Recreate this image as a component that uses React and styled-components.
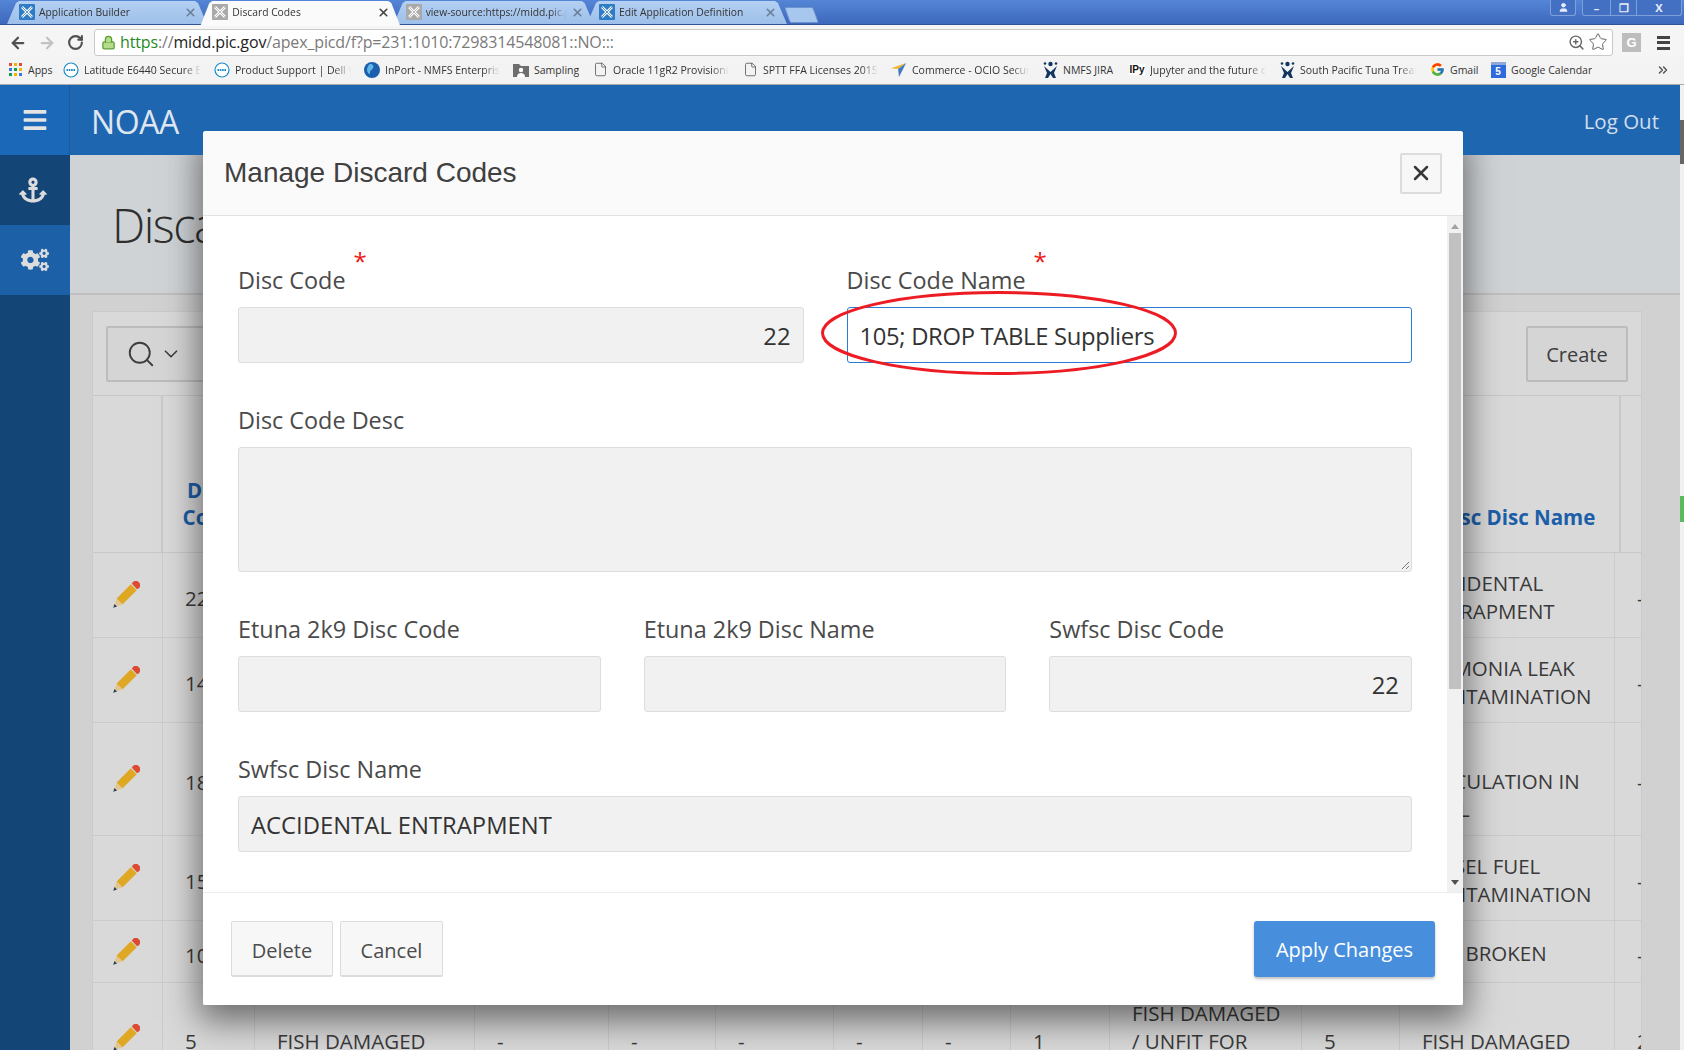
import styled, { createGlobalStyle } from "styled-components";
import { FaAnchor, FaCogs, FaBars } from "react-icons/fa";
import { FcGoogle } from "react-icons/fc";
import { File, Search, ChevronDown, X, RotateCw, ArrowLeft, ArrowRight, Star, ZoomIn, Lock, User, ChevronsRight } from "lucide-react";

const GlobalStyle = createGlobalStyle`
  html, body { margin: 0; padding: 0; overflow: hidden; }
  body { font-family: "Open Sans", "Liberation Sans", sans-serif; color: #333; }
  * { box-sizing: border-box; }
`;

const Viewport = styled.div`
  position: relative;
  width: 1684px;
  height: 1050px;
  overflow: hidden;
  display: flex;
  flex-direction: column;
`;

/* browser chrome */
const TabStrip = styled.div`
  height: 25px;
  flex: none;
  display: flex;
  padding-left: 7px;
  background: linear-gradient(#5585d6, #3d68bb);
  border-bottom: 1px solid #2f5398;
`;

const Tab = styled.div`
  position: relative;
  z-index: ${(p) => (p.$active ? 2 : 1)};
  width: 200px;
  height: ${(p) => (p.$active ? 25 : 23)}px;
  margin: 1px -6.7px 0 0;
  padding: 0 10px ${(p) => (p.$active ? 3 : 1)}px 12px;
  display: flex;
  align-items: center;
  gap: 4px;
  font-size: 10.3px;
  color: #333;
  background: ${(p) => (p.$active ? "#fafafa" : "linear-gradient(#b4d0f2, #9dbfea)")};
  clip-path: polygon(0 100%, 9px 2px, 12px 0, calc(100% - 12px) 0, calc(100% - 9px) 2px, 100% 100%);
`;

const TabLabel = styled.span`
  flex: 1;
  white-space: nowrap;
  overflow: hidden;
  mask-image: linear-gradient(to right, #000 88%, transparent);
`;

const TabClose = styled(X)`
  flex: none;
  color: ${(p) => (p.$active ? "#444" : "#6c7f99")};
`;

const NewTab = styled.div`
  width: 29px;
  height: 16px;
  margin: 7px 0 0 7px;
  background: #a8c7ef;
  border: 1px solid #6f93cf;
  transform: skewX(20deg);
  border-radius: 2px;
`;

const WindowControls = styled.div`
  margin-left: auto;
  margin-right: 2px;
  display: flex;
  gap: 6px;
  height: 16px;
`;

const WindowGroup = styled.div`
  display: flex;
  align-items: center;
  height: 16px;
  border: 1px solid #7ea0da;
  border-top: none;
  border-radius: 0 0 3px 3px;
  background: #4470c4;
  color: #e9eef8;
`;

const WindowButton = styled.div`
  width: ${(p) => p.$w}px;
  height: 15px;
  display: flex;
  align-items: center;
  justify-content: center;
  font-size: 11px;
  font-weight: 700;
  & + & { border-left: 1px solid #7ea0da; }
`;

const Toolbar = styled.div`
  height: 32px;
  flex: none;
  display: flex;
  align-items: center;
  background: #f5f5f5;
  padding: 3px 14px 0 0;
`;

const NavButton = styled.div`
  width: 29px;
  display: flex;
  justify-content: center;
  color: ${(p) => (p.$off ? "#c2c2c2" : "#505050")};
`;

const NavGroup = styled.div`
  display: flex;
  padding-left: 3px;
  width: 94px;
`;

const Omnibox = styled.div`
  width: 1519px;
  height: 27px;
  display: flex;
  align-items: center;
  background: #fff;
  border: 1px solid #c9c9c9;
  border-radius: 3px;
  padding: 0 4px 1px 6px;
  font-size: 16px;
  letter-spacing: -0.15px;
`;

const UrlGreen = styled.span`
  color: #1f8a1f;
  margin-left: 4px;
`;
const UrlHost = styled.span`
  color: #222;
`;
const UrlPath = styled.span`
  color: #7a7a7a;
`;

const OmniIcons = styled.div`
  margin-left: auto;
  display: flex;
  align-items: center;
  gap: 3px;
  color: #666;
`;

const ExtBadge = styled.div`
  width: 19px;
  height: 19px;
  margin-left: 9px;
  background: #bdbdbd;
  color: #fff;
  font: 700 13px "Liberation Sans", sans-serif;
  display: flex;
  align-items: center;
  justify-content: center;
`;

const ChromeMenu = styled.div`
  width: 13px;
  margin-left: 16px;
  display: flex;
  flex-direction: column;
  gap: 2.5px;
  & > i { display: block; height: 3px; background: #444; }
`;

const Bookmarks = styled.div`
  height: 28px;
  flex: none;
  display: flex;
  align-items: center;
  padding: 0 0 2px 7px;
  background: #f3f3f3;
  border-bottom: 1px solid #a9a9a9;
  font-size: 10.5px;
  color: #333;
`;

const Bookmark = styled.div`
  width: ${(p) => p.$w}px;
  flex: none;
  display: flex;
  align-items: center;
  gap: 5px;
`;

const BookmarkIcon = styled.div`
  width: 16px;
  height: 16px;
  flex: none;
  display: flex;
  align-items: center;
  justify-content: center;
`;

const BookmarkText = styled.span`
  white-space: nowrap;
  overflow: hidden;
  flex: ${(p) => (p.$fade ? 1 : "none")};
  margin-right: ${(p) => (p.$fade ? "13px" : 0)};
  ${(p) => p.$fade && "mask-image: linear-gradient(to right, #000 85%, transparent);"}
`;

const IpyBadge = styled.span`
  font: 700 10px "Liberation Sans", sans-serif;
  color: #111;
  background: #fff;
`;

const CalBadge = styled.span`
  width: 15px;
  height: 16px;
  background: #2f6bdc;
  color: #fff;
  border-top: 3px solid #8fa9d8;
  font: 700 10px "Liberation Sans", sans-serif;
  display: flex;
  align-items: center;
  justify-content: center;
`;

const MoreMarks = styled(ChevronsRight)`
  margin-left: auto;
  margin-right: 14px;
  color: #555;
`;

/* application shell */
const Shell = styled.div`
  flex: 1;
  display: flex;
  min-height: 0;
`;

const AppColumn = styled.div`
  flex: 1;
  display: flex;
  flex-direction: column;
  min-width: 0;
`;

const PageScroll = styled.div`
  width: 4px;
  flex: none;
  background: #f1f1f1;
`;

const PageThumb = styled.div`
  height: 44px;
  margin-top: 35px;
  background: #666;
`;

const PageMark = styled.div`
  height: 26px;
  margin-top: 332px;
  background: #5cb85c;
`;

const AppHeader = styled.header`
  position: relative;
  z-index: 2;
  height: 70px;
  flex: none;
  display: flex;
  align-items: center;
  background: #1f66b0;
  color: #dfe6f0;
`;

const MenuCell = styled.div`
  width: 70px;
  height: 100%;
  display: flex;
  align-items: center;
  justify-content: center;
  background: #1c68b8;
  border-right: 1px solid #1b5ba3;
  color: #e4e4e4;
  font-size: 26px;
`;

const Brand = styled.div`
  margin: 2px 0 0 21px;
  font-size: 32px;
  letter-spacing: -0.4px;
`;

const LogOut = styled.div`
  margin: 2px 21px 0 auto;
  font-size: 20.5px;
  color: #d3deec;
`;

const Below = styled.div`
  flex: 1;
  display: flex;
  min-height: 0;
`;

const Sidebar = styled.nav`
  width: 70px;
  flex: none;
  background: #144577;
`;

const SideItem = styled.div`
  height: 70px;
  display: flex;
  align-items: center;
  justify-content: center;
  padding-right: ${(p) => (p.$light ? 0 : 4)}px;
  color: #dcdcdc;
  font-size: 28px;
  background: ${(p) => (p.$light ? "#1c60a8" : "#144577")};
`;

const Content = styled.main`
  flex: 1;
  min-width: 0;
  background: #d1d1d1;
`;

const TitleBand = styled.div`
  height: 140px;
  padding: 37px 0 0 42px;
  background: #d0d3d6;
  border-bottom: 2px solid #bfbfbf;
  font-size: 47px;
  font-weight: 300;
  letter-spacing: -1.5px;
  line-height: 66px;
  color: #2e2e2e;
  white-space: nowrap;
`;

const Panel = styled.section`
  width: 1550px;
  margin: 16px 0 0 22px;
  background: #d9d9d9;
  border: 1px solid #cacaca;
  border-bottom: none;
  overflow: hidden;
`;

const PanelBar = styled.div`
  height: 84px;
  padding: 14px 13px 0 13px;
  display: flex;
  justify-content: space-between;
  border-bottom: 1px solid #c8c8c8;
`;

const BarButton = styled.div`
  height: 56px;
  width: ${(p) => p.$w}px;
  display: flex;
  align-items: center;
  justify-content: ${(p) => (p.$start ? "flex-start" : "center")};
  padding: ${(p) => (p.$start ? "0 0 0 18px" : "1px 0 0")};
  gap: 4px;
  background: #d5d5d5;
  border: 2px solid #bcbcbc;
  border-radius: 2px;
  font-size: 20px;
  color: #3d3d3d;
`;

const HeadRow = styled.div`
  height: 157px;
  display: grid;
  grid-template-columns: 70px 92px 220px 134px 107px 118px 89px 88px 99px 192px 98px 221px 21px;
  border-bottom: 1px solid #c8c8c8;
`;

const HeadCell = styled.div`
  display: flex;
  align-items: flex-end;
  justify-content: center;
  padding: 0 6px 21px;
  text-align: center;
  font-size: 20.5px;
  line-height: 27px;
  font-weight: 700;
  color: #1c5ea8;
  border-right: 2px solid #c8c8c8;
  white-space: pre-line;
  &:last-child { border-right: none; }
`;

const Row = styled.div`
  height: ${(p) => p.$h}px;
  display: grid;
  grid-template-columns: 70px 92px 220px 134px 107px 118px 89px 88px 99px 192px 98px 215px 27px;
  border-bottom: 1px solid #cbcbcb;
`;

const Cell = styled.div`
  display: flex;
  align-items: center;
  justify-content: ${(p) => (p.$center ? "center" : "flex-start")};
  padding: ${(p) => (p.$center ? "0 4px 0 0" : `${p.$shift || 6}px 0 0 22px`)};
  border-right: 1px solid #cbcbcb;
  font-size: 20.5px;
  line-height: 28px;
  color: #3a3a3a;
  white-space: pre-line;
  overflow: hidden;
  &:last-child { border-right: none; }
`;

/* modal */
const ModalShade = styled.div`
  position: absolute;
  z-index: 1;
  left: 203px;
  top: 131px;
  width: 1260px;
  height: 874px;
  box-shadow: 0 12px 32px 4px rgba(0, 0, 0, 0.5);
`;

const Modal = styled.div`
  position: absolute;
  z-index: 3;
  left: 203px;
  top: 131px;
  width: 1260px;
  height: 874px;
  display: flex;
  flex-direction: column;
  background: #fff;
  border-radius: 3px;
`;

const ModalHead = styled.div`
  height: 85px;
  flex: none;
  display: flex;
  align-items: center;
  justify-content: space-between;
  padding: 0 21px;
  background: #fafafa;
  border-bottom: 1px solid #e2e2e2;
  border-radius: 3px 3px 0 0;
`;

const ModalTitle = styled.h2`
  margin: 0;
  font: 400 28px "Liberation Sans", sans-serif;
  color: #404040;
`;

const CloseButton = styled.div`
  width: 42px;
  height: 41px;
  display: flex;
  align-items: center;
  justify-content: center;
  background: #f7f7f7;
  border: 2px solid #dcdcdc;
  border-radius: 2px;
  color: #383838;
`;

const ModalBody = styled.div`
  height: 676px;
  flex: none;
  display: flex;
  min-height: 0;
`;

const Form = styled.div`
  flex: 1;
  padding: 48px 35px 0 35px;
  display: flex;
  flex-direction: column;
  gap: 41px;
  overflow: hidden;
`;

const FormRow = styled.div`
  display: grid;
  grid-template-columns: repeat(${(p) => p.$cols}, 1fr);
  column-gap: ${(p) => p.$gap}px;
`;

const Field = styled.div`
  min-width: 0;
`;

const FieldLabel = styled.div`
  display: flex;
  align-items: flex-start;
  height: 32px;
  margin-bottom: 11px;
  font-size: 23.4px;
  line-height: 32px;
  color: #4a4a4a;
  white-space: nowrap;
`;

const Required = styled.span`
  height: 20px;
  margin: -19px 0 0 8px;
  font-size: 24px;
  line-height: 32px;
  color: #f01515;
`;

const FieldBox = styled.div`
  height: ${(p) => p.$h || 56}px;
  display: flex;
  align-items: center;
  justify-content: ${(p) => (p.$right ? "flex-end" : "flex-start")};
  padding: 2px 12px 0;
  font-size: 23.8px;
  letter-spacing: ${(p) => (p.$focus ? "-0.32px" : 0)};
  color: #333;
  background: ${(p) => (p.$focus ? "#fff" : "#f1f1f1")};
  border: 1px solid ${(p) => (p.$focus ? "#2a7bd3" : "#dddddd")};
  border-radius: 3px;
  white-space: nowrap;
`;

const TextAreaBox = styled(FieldBox)`
  position: relative;
`;

const Grip = styled.svg`
  position: absolute;
  right: 1px;
  bottom: 1px;
`;

const ModalScroll = styled.div`
  width: 16px;
  flex: none;
  background: #f1f1f1;
  display: flex;
  flex-direction: column;
  align-items: center;
`;

const ScrollArrow = styled.div`
  width: 0;
  height: 0;
  margin: ${(p) => (p.$down ? "auto 0 7px" : "8px 0 4px")};
  border-left: 4px solid transparent;
  border-right: 4px solid transparent;
  ${(p) => (p.$down ? "border-top: 5px solid #505050;" : "border-bottom: 5px solid #a3a3a3;")}
`;

const ScrollThumb = styled.div`
  width: 12px;
  height: 456px;
  background: #c1c1c1;
`;

const ModalFoot = styled.div`
  flex: 1;
  display: flex;
  align-items: flex-start;
  gap: 7px;
  padding: 28px 28px 0 28px;
  border-top: 1px solid #ececec;
`;

const FootButton = styled.div`
  height: 56px;
  width: ${(p) => p.$w}px;
  padding-top: 3px;
  display: flex;
  align-items: center;
  justify-content: center;
  font-size: 20px;
  color: #4c4c4c;
  background: #f7f7f7;
  border: 1px solid #dcdcdc;
  border-bottom-width: 2px;
  border-radius: 2px;
`;

const ApplyButton = styled.div`
  height: 56px;
  width: 181px;
  margin-left: auto;
  display: flex;
  align-items: center;
  justify-content: center;
  font-size: 20px;
  color: #fff;
  background: #478fdd;
  border-radius: 3px;
  box-shadow: 0 2px 3px rgba(0, 0, 0, 0.25);
`;

const Annotation = styled.svg`
  position: absolute;
  left: 616px;
  top: 158px;
  pointer-events: none;
`;

const AppFavicon = ({ grey }) => (
  <svg width="16" height="16" viewBox="0 0 16 16" style={{ flex: "none" }}>
    <rect width="16" height="16" rx="1" fill={grey ? "#a9a9a9" : "#2f7cc4"} />
    <path d="M3 3l10 10M13 3L3 13" stroke="#fff" strokeWidth="2.6" />
    <path d="M3 3l10 10M13 3L3 13" stroke={grey ? "#a9a9a9" : "#2f7cc4"} strokeWidth="0.8" />
  </svg>
);

const AppsIcon = () => (
  <svg width="13" height="13" viewBox="0 0 13 13">
    {["#e8453c", "#f4b400", "#e8453c", "#3b78e7", "#0f9d58", "#f4b400", "#0f9d58", "#f4b400", "#3b78e7"].map((c, i) => (
      <rect key={i} x={(i % 3) * 5} y={Math.floor(i / 3) * 5} width="3" height="3" fill={c} />
    ))}
  </svg>
);

const DellIcon = () => (
  <svg width="16" height="16" viewBox="0 0 16 16">
    <circle cx="8" cy="8" r="7" fill="#fff" stroke="#1a8cc9" strokeWidth="1.2" />
    <path d="M3.5 8h9" stroke="#1a8cc9" strokeWidth="2" strokeDasharray="1.6 .7" />
  </svg>
);

const GlobeIcon = () => (
  <svg width="16" height="16" viewBox="0 0 16 16">
    <circle cx="8" cy="8" r="8" fill="#1b5fae" />
    <path d="M6 2c3 0 4 2 3 4S6 8 6 11s-3-1-3-3 1-5 3-6z" fill="#63b7e6" />
  </svg>
);

const SamplingIcon = () => (
  <svg width="16" height="16" viewBox="0 0 16 16">
    <path d="M0 2h6l2 2h8v11H0z" fill="#6e6e6e" />
    <circle cx="8" cy="8" r="2.2" fill="#fff" />
    <path d="M4 15c0-3 2-4 4-4s4 1 4 4z" fill="#fff" />
  </svg>
);

const CommerceIcon = () => (
  <svg width="18" height="16" viewBox="0 0 18 16">
    <path d="M17 0L0 6l8 1z" fill="#f4b42c" />
    <path d="M17 0L8 7l1 9z" fill="#3f78c4" />
  </svg>
);

const JiraIcon = () => (
  <svg width="15" height="17" viewBox="0 0 15 17">
    <circle cx="7.5" cy="3" r="2.2" fill="#12365e" />
    <circle cx="2" cy="2.5" r="1.3" fill="#12365e" />
    <circle cx="13" cy="2.5" r="1.3" fill="#12365e" />
    <path d="M1 5l6.500 6L14 5l-3 7 2 5h-3l-2.500-4L5 17H2l2-5z" fill="#12365e" />
  </svg>
);

const PencilIcon = () => (
  <svg width="28" height="28" viewBox="0 0 28 28">
    <g transform="rotate(-45 14 14)">
      <polygon points="-4,14 5,9.800 5,18.200" fill="#e3c68e" />
      <polygon points="-4,14 -0.500,12.200 -0.500,15.800" fill="#24405f" />
      <rect x="5" y="9.800" width="20" height="8.400" fill="#dfa823" />
      <rect x="26" y="9.800" width="6" height="8.400" rx="1.500" fill="#dd4b34" />
    </g>
  </svg>
);

const tabs = [
  { label: "Application Builder" },
  { label: "Discard Codes", active: true, grey: true },
  { label: "view-source:https://midd.pic.gov/apex_picd/f?p=231", grey: true },
  { label: "Edit Application Definition" },
];

const bookmarks = [
  { w: 56, icon: <AppsIcon />, text: "Apps" },
  { w: 151, icon: <DellIcon />, text: "Latitude E6440 Secure Encrypted", fade: true },
  { w: 150, icon: <DellIcon />, text: "Product Support | Dell US", fade: true },
  { w: 149, icon: <GlobeIcon />, text: "InPort - NMFS Enterprise Data", fade: true },
  { w: 79, icon: <SamplingIcon />, text: "Sampling" },
  { w: 150, icon: <File size={15} strokeWidth={1.3} color="#555" />, text: "Oracle 11gR2 Provisioning", fade: true },
  { w: 149, icon: <File size={15} strokeWidth={1.3} color="#555" />, text: "SPTT FFA Licenses 2015 2016", fade: true },
  { w: 151, icon: <CommerceIcon />, text: "Commerce - OCIO Security Portal", fade: true },
  { w: 87, icon: <JiraIcon />, text: "NMFS JIRA" },
  { w: 150, icon: <IpyBadge>IPy</IpyBadge>, text: "Jupyter and the future of IPython", fade: true },
  { w: 150, icon: <JiraIcon />, text: "South Pacific Tuna Treaty Project", fade: true },
  { w: 61, icon: <FcGoogle size={15} />, text: "Gmail" },
  { w: 110, icon: <CalBadge>5</CalBadge>, text: "Google Calendar" },
];

const headLabels = ["", "Disc\nCode", "", "", "", "", "", "", "", "", "", "Swfsc Disc Name", ""];

// only the columns the open dialog leaves visible carry values in rows 1-5
const rows = [
  { h: 85, cells: ["22"], far: "ACCIDENTAL\nENTRAPMENT", farShift: 4 },
  { h: 85, cells: ["14"], far: "AMMONIA LEAK\nCONTAMINATION", farShift: 4 },
  { h: 113, cells: ["18"], far: "CIRCULATION IN\nFUEL", farShift: 32 },
  { h: 85, cells: ["15"], far: "DIESEL FUEL\nCONTAMINATION", farShift: 4 },
  { h: 62, cells: ["10"], far: "NET BROKEN", farShift: 2 },
  {
    h: 110,
    cells: ["5", "FISH DAMAGED", "-", "-", "-", "-", "-", "1", "FISH DAMAGED\n/ UNFIT FOR\nUSE", "5"],
    far: "FISH DAMAGED",
    last: "2",
  },
];

const App = () => (
  <Viewport>
    <GlobalStyle />
    <TabStrip>
      {tabs.map((t) => (
        <Tab key={t.label} $active={t.active}>
          <AppFavicon grey={t.grey} />
          <TabLabel>{t.label}</TabLabel>
          <TabClose size={13} strokeWidth={3} $active={t.active} />
        </Tab>
      ))}
      <NewTab />
      <WindowControls>
        <WindowGroup>
          <WindowButton $w={24}>
            <User size={11} fill="#e9eef8" />
          </WindowButton>
        </WindowGroup>
        <WindowGroup>
          <WindowButton $w={27}>–</WindowButton>
          <WindowButton $w={26}>❐</WindowButton>
          <WindowButton $w={45}>X</WindowButton>
        </WindowGroup>
      </WindowControls>
    </TabStrip>

    <Toolbar>
      <NavGroup>
        <NavButton><ArrowLeft size={18} strokeWidth={3} /></NavButton>
        <NavButton $off><ArrowRight size={18} strokeWidth={3} /></NavButton>
        <NavButton><RotateCw size={17} strokeWidth={3} /></NavButton>
      </NavGroup>
      <Omnibox>
        <Lock size={15} color="#5a9e2f" fill="#b5dc8c" />
        <UrlGreen>https</UrlGreen>
        <UrlPath>://</UrlPath>
        <UrlHost>midd.pic.gov</UrlHost>
        <UrlPath>/apex_picd/f?p=231:1010:7298314548081::NO:::</UrlPath>
        <OmniIcons>
          <ZoomIn size={17} strokeWidth={2} />
          <Star size={20} strokeWidth={1.2} />
        </OmniIcons>
      </Omnibox>
      <ExtBadge>G</ExtBadge>
      <ChromeMenu><i /><i /><i /></ChromeMenu>
    </Toolbar>

    <Bookmarks>
      {bookmarks.map((b) => (
        <Bookmark key={b.text} $w={b.w}>
          <BookmarkIcon>{b.icon}</BookmarkIcon>
          <BookmarkText $fade={b.fade}>{b.text}</BookmarkText>
        </Bookmark>
      ))}
      <MoreMarks size={14} strokeWidth={2.5} />
    </Bookmarks>

    <Shell>
      <AppColumn>
        <AppHeader>
          <MenuCell><FaBars /></MenuCell>
          <Brand>NOAA</Brand>
          <LogOut>Log Out</LogOut>
        </AppHeader>
        <Below>
          <Sidebar>
            <SideItem><FaAnchor /></SideItem>
            <SideItem $light><FaCogs /></SideItem>
          </Sidebar>
          <Content>
            <TitleBand>Discard Codes</TitleBand>
            <Panel>
              <PanelBar>
                <BarButton $w={130} $start>
                  <Search size={30} strokeWidth={1.5} />
                  <ChevronDown size={22} strokeWidth={1.8} />
                </BarButton>
                <BarButton $w={102}>Create</BarButton>
              </PanelBar>
              <HeadRow>
                {headLabels.map((l, i) => (
                  <HeadCell key={i}>{l}</HeadCell>
                ))}
              </HeadRow>
              {rows.map((r) => (
                <Row key={r.cells[0]} $h={r.h}>
                  <Cell $center><PencilIcon /></Cell>
                  {Array.from({ length: 10 }, (_, i) => (
                    <Cell key={i}>{r.cells[i]}</Cell>
                  ))}
                  <Cell $shift={r.farShift}>{r.far}</Cell>
                  <Cell>{r.last || "-"}</Cell>
                </Row>
              ))}
            </Panel>
          </Content>
        </Below>
      </AppColumn>
      <PageScroll>
        <PageThumb />
        <PageMark />
      </PageScroll>
    </Shell>

    <ModalShade />
    <Modal>
      <ModalHead>
        <ModalTitle>Manage Discard Codes</ModalTitle>
        <CloseButton><X size={24} strokeWidth={2.5} /></CloseButton>
      </ModalHead>
      <ModalBody>
        <Form>
          <FormRow $cols={2} $gap={43}>
            <Field>
              <FieldLabel>Disc Code<Required>*</Required></FieldLabel>
              <FieldBox $right>22</FieldBox>
            </Field>
            <Field>
              <FieldLabel>Disc Code Name<Required>*</Required></FieldLabel>
              <FieldBox $focus>105; DROP TABLE Suppliers</FieldBox>
            </Field>
          </FormRow>
          <FormRow $cols={1}>
            <Field>
              <FieldLabel>Disc Code Desc</FieldLabel>
              <TextAreaBox $h={125}>
                <Grip width="10" height="10" viewBox="0 0 10 10">
                  <path d="M2 9l7-7M6 9l3-3" stroke="#777" strokeWidth="1" />
                </Grip>
              </TextAreaBox>
            </Field>
          </FormRow>
          <FormRow $cols={3} $gap={43}>
            <Field>
              <FieldLabel>Etuna 2k9 Disc Code</FieldLabel>
              <FieldBox />
            </Field>
            <Field>
              <FieldLabel>Etuna 2k9 Disc Name</FieldLabel>
              <FieldBox />
            </Field>
            <Field>
              <FieldLabel>Swfsc Disc Code</FieldLabel>
              <FieldBox $right>22</FieldBox>
            </Field>
          </FormRow>
          <FormRow $cols={1}>
            <Field>
              <FieldLabel>Swfsc Disc Name</FieldLabel>
              <FieldBox>ACCIDENTAL ENTRAPMENT</FieldBox>
            </Field>
          </FormRow>
        </Form>
        <ModalScroll>
          <ScrollArrow />
          <ScrollThumb />
          <ScrollArrow $down />
        </ModalScroll>
      </ModalBody>
      <ModalFoot>
        <FootButton $w={102}>Delete</FootButton>
        <FootButton $w={103}>Cancel</FootButton>
        <ApplyButton>Apply Changes</ApplyButton>
      </ModalFoot>
      <Annotation width="360" height="88" viewBox="0 0 360 88">
        <ellipse cx="180" cy="44" rx="176.500" ry="40.500" fill="none" stroke="#ed1c24" strokeWidth="3" />
      </Annotation>
    </Modal>
  </Viewport>
);

export default App;
